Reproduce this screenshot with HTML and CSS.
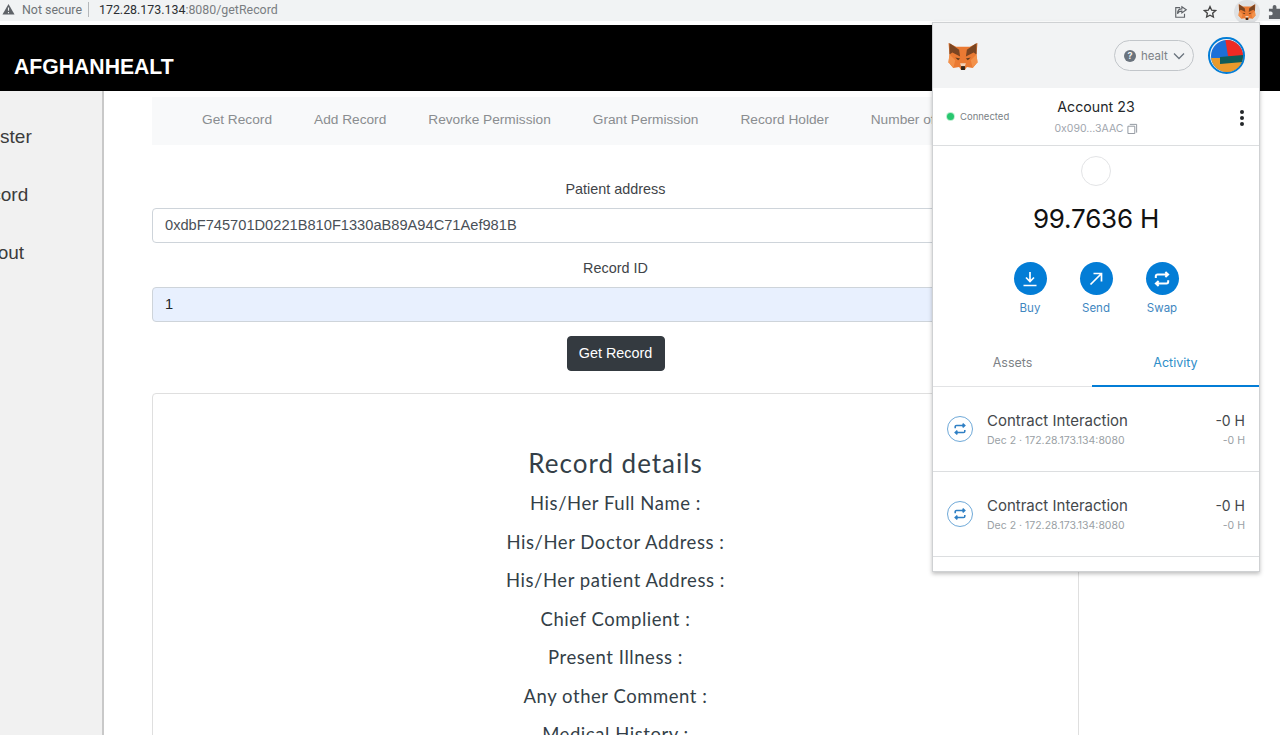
FILE: index.html
```html
<!DOCTYPE html>
<html lang="en">
<head>
<meta charset="utf-8">
<title>AfghanHealth</title>
<link rel="stylesheet" href="styles.css">
</head>
<body>
<svg class="defs" width="0" height="0" aria-hidden="true">
  <defs>
    <symbol id="fox" viewBox="0 0 32 30">
      <polygon points="1,2 9,6 23,6 31,2 30,14 31,22 26,28 20,27 18,30 14,30 12,27 6,28 1,22 2,14" fill="#ea7a33"/>
      <polygon points="2,2 12,9 13,16 5,12 2,14" fill="#7a4522"/>
      <polygon points="30,2 20,9 19,16 27,12 30,14" fill="#7a4522"/>
      <polygon points="1,22 2,14 8,20 6,28" fill="#f3914a"/>
      <polygon points="31,22 30,14 24,20 26,28" fill="#f3914a"/>
      <polygon points="13,23 19,23 18,26 14,26" fill="#f3d2b8"/>
      <polygon points="14,26 18,26 18,30 14,30" fill="#33261a"/>
      <polygon points="8,17 13,18 11,20" fill="#5c3a1e"/>
      <polygon points="24,17 19,18 21,20" fill="#5c3a1e"/>
    </symbol>
    <symbol id="swap" viewBox="0 0 16 16">
      <path d="M2.500 7V5.500A1.500 1.500 0 0 1 4 4h9M11 1.800 13.400 4 11 6.200M13.500 9v1.500A1.500 1.500 0 0 1 12 12H3M5 9.800 2.600 12 5 14.200" fill="none" stroke="currentColor" stroke-width="1.800"/>
    </symbol>
  </defs>
</svg>

<header class="chrome">
  <svg class="warn" viewBox="0 0 14 12" width="13" height="12"><path d="M7 0.500 13.500 12H.5Z" fill="#5f6368"/><path d="M7 4.500V8M7 9.200v1.300" stroke="#f1f3f4" stroke-width="1.200"/></svg>
  <span class="not-secure">Not secure</span>
  <span class="url"><b>172.28.173.134</b>:8080/getRecord</span>
  <span class="chrome-tools">
    <svg viewBox="0 0 16 16" width="14" height="14"><path d="M9 2l5 3.500L9 9V7C6 7 4.800 8 4 10c0-3.500 2-5.500 5-5.500zM7 3H2v11h10v-4" fill="none" stroke="#5f6368" stroke-width="1.300"/></svg>
    <svg class="star" viewBox="0 0 16 16" width="14" height="14"><path d="M8 1.800l1.900 4.100 4.400.500-3.300 3 .900 4.400L8 11.600 4.100 13.800l.900-4.400-3.300-3 4.400-.500z" fill="none" stroke="#444" stroke-width="1.500"/></svg>
    <span class="ext-btn"><svg width="18" height="17"><use href="#fox"/></svg></span>
    <svg class="puzzle" viewBox="0 0 16 16" width="15" height="15"><path d="M1 5h4V3a2 2 0 0 1 4 0v2h4v4h2a2 2 0 0 1 0 4h-2v3H1v-4h2a2 2 0 0 0 0-4H1z" fill="#5f6368"/></svg>
  </span>
</header>

<div class="topbar"><span class="brand">AFGHANHEALT</span></div>

<div class="page">
  <aside class="sidebar">
    <a class="side-register">Register</a>
    <a class="side-record">Record</a>
    <a class="side-logout">Logout</a>
  </aside>
  <main class="main">
    <nav class="tabs">
      <a>Get Record</a>
      <a>Add Record</a>
      <a>Revorke Permission</a>
      <a>Grant Permission</a>
      <a>Record Holder</a>
      <a>Number of Records</a>
    </nav>
    <form class="form">
      <label class="label">Patient address</label>
      <div class="input">0xdbF745701D0221B810F1330aB89A94C71Aef981B</div>
      <label class="label second">Record ID</label>
      <div class="input filled">1</div>
      <button class="btn" type="button">Get Record</button>
    </form>
    <section class="card">
      <h2>Record details</h2>
      <p>His/Her Full Name :</p>
      <p>His/Her Doctor Address :</p>
      <p>His/Her patient Address :</p>
      <p>Chief Complient :</p>
      <p>Present Illness :</p>
      <p>Any other Comment :</p>
      <p>Medical History :</p>
    </section>
  </main>
</div>

<aside class="mm">
  <div class="mm-head">
    <svg width="32" height="29"><use href="#fox"/></svg>
    <div class="network">
      <span class="q">?</span>
      <span class="net-name">healt</span>
      <svg viewBox="0 0 12 8" width="12" height="8"><path d="M1 1.500 6 6.500 11 1.500" fill="none" stroke="#6a737d" stroke-width="1.300"/></svg>
    </div>
    <span class="avatar">
      <svg viewBox="0 0 32 32" width="32" height="32">
        <defs><clipPath id="round"><circle cx="16" cy="16" r="16"/></clipPath></defs>
        <g clip-path="url(#round)">
          <rect width="32" height="32" fill="#1c6fd8"/>
          <polygon points="14,-2 34,-2 34,20 17,16" fill="#ee2a24"/>
          <rect x="0" y="18" width="32" height="16" fill="#e99a2c"/>
          <polygon points="9,17 32,15 32,22 9,24" fill="#0e5c58"/>
        </g>
      </svg>
    </span>
  </div>
  <div class="mm-account">
    <span class="conn"><i></i>Connected</span>
    <div class="acct">
      <div class="acct-name">Account 23</div>
      <div class="acct-addr">0x090...3AAC
        <svg viewBox="0 0 12 12" width="11" height="11"><path d="M3 1.500h7.500V10.500M1 3.500h7.500v8H1z" fill="none" stroke="#8a9099"/></svg>
      </div>
    </div>
    <span class="kebab"><i></i><i></i><i></i></span>
  </div>
  <div class="mm-balance">
    <span class="token"></span>
    <div class="amount">99.7636 H</div>
    <div class="actions">
      <div class="action">
        <span class="round">
          <svg viewBox="0 0 20 20" width="20" height="20"><path d="M10 3v9M6 8.500l4 4 4-4M3.500 16.500h13" fill="none" stroke="#fff" stroke-width="1.700"/></svg>
        </span>Buy
      </div>
      <div class="action">
        <span class="round">
          <svg viewBox="0 0 20 20" width="20" height="20"><path d="M4.500 15.500 15 5M7.500 4.500h8v8" fill="none" stroke="#fff" stroke-width="1.700"/></svg>
        </span>Send
      </div>
      <div class="action">
        <span class="round">
          <svg width="18" height="18"><use href="#swap"/></svg>
        </span>Swap
      </div>
    </div>
  </div>
  <div class="mm-tabs">
    <span class="assets">Assets</span>
    <span class="active">Activity</span>
  </div>
  <div class="tx">
    <span class="tx-icon"><svg width="14" height="14"><use href="#swap"/></svg></span>
    <div class="tx-text">
      <div class="tx-title">Contract Interaction</div>
      <div class="tx-sub">Dec 2 · 172.28.173.134:8080</div>
    </div>
    <div class="tx-val">
      <div class="tx-amt">-0 H</div>
      <div class="tx-sub">-0 H</div>
    </div>
  </div>
  <div class="tx">
    <span class="tx-icon"><svg width="14" height="14"><use href="#swap"/></svg></span>
    <div class="tx-text">
      <div class="tx-title">Contract Interaction</div>
      <div class="tx-sub">Dec 2 · 172.28.173.134:8080</div>
    </div>
    <div class="tx-val">
      <div class="tx-amt">-0 H</div>
      <div class="tx-sub">-0 H</div>
    </div>
  </div>
</aside>
</body>
</html>
```
FILE: styles.css
```css
* { box-sizing: border-box; }
html, body { margin: 0; height: 735px; overflow: hidden; }
body { position: relative; background: #fff; font-family: "Liberation Sans", Arial, sans-serif; color: #212529; }
.defs { display: block; }

.chrome { height: 25px; padding: 0 0 2px 2px; display: flex; align-items: center; background: #f1f3f4; border-bottom: 4px solid #fff; font-family: Roboto, sans-serif; font-size: 12.400px; color: #5f6368; }
.warn { flex: none; margin-top: -2px; }
.not-secure { margin-left: 7px; padding-right: 6px; border-right: 1px solid #b5b8bb; color: #6f7377; }
.url { margin-left: 10px; color: #7a7e82; }
.url b { font-weight: 400; color: #2b2e31; }
.chrome-tools { margin-left: auto; margin-top: 4px; display: flex; align-items: center; }
.chrome-tools svg { flex: none; }
.star { margin-left: 15px; }
.ext-btn { margin-left: 17px; width: 26px; height: 24px; display: flex; align-items: center; justify-content: center; background: #dfe1e3; border-radius: 12px; }
.puzzle { margin: 0 -3px 0 8px; }

.topbar { height: 66px; background: #000; display: flex; align-items: center; padding: 17px 0 0 14px; }
.brand { color: #fff; font-size: 21.200px; font-weight: 700; }

.page { display: flex; height: 644px; overflow: hidden; }
.sidebar { flex: none; width: 104px; background: #f1f1f1; border-right: 2px solid #c9c9c9; padding-top: 35px; overflow: hidden; display: flex; flex-direction: column; gap: 36px; }
.sidebar a { font-size: 19px; line-height: 22px; color: #3c3c3c; white-space: nowrap; }
.side-register { margin-left: -39px; }
.side-record { margin-left: -33px; }
.side-logout { margin-left: -34px; }

.main { flex: none; width: 927px; margin-left: 48px; padding-top: 6px; text-align: center; }
.tabs { height: 48px; padding: 0 0 4px 50px; display: flex; align-items: center; gap: 42px; background: #f8f9fa; font-size: 13.700px; color: #8a8d90; white-space: nowrap; overflow: hidden; }
.form { display: flex; flex-direction: column; align-items: center; padding-top: 36px; }
.label { font-size: 14.400px; line-height: 17px; color: #3f4448; margin-bottom: 10px; }
.label.second { margin-top: 17px; margin-bottom: 10px; }
.input { width: 100%; height: 35px; padding: 0 12px 2px; display: flex; align-items: center; border: 1px solid #ced4da; border-radius: 4px; font-size: 14.650px; color: #495057; background: #fff; }
.input.filled { background: #e8f0fe; color: #212529; }
.btn { margin-top: 14px; width: 98px; height: 35px; padding-bottom: 3px; border: 1px solid #343a40; border-radius: 4px; background: #343a40; color: #fff; font: 14.400px "Liberation Sans", Arial, sans-serif; }
.card { margin-top: 22px; height: 400px; padding-top: 53px; border: 1px solid #dfdfdf; border-radius: 4px; font-family: "Lato", sans-serif; color: #343f48; }
.card h2 { margin: 0; font-size: 26px; line-height: 33px; font-weight: 400; letter-spacing: 1px; }
.card p { margin: 0 0 14.500px; font-size: 18.500px; line-height: 24px; letter-spacing: .55px; }
.card h2 + p { margin-top: 11px; }

.mm { position: absolute; left: 932px; top: 22px; width: 328px; height: 550px; background: #fff; border: 1px solid #cfd1d3; box-shadow: 0 2px 4px rgba(0,0,0,.25); font-family: Inter, sans-serif; }
.mm-head { height: 65px; padding: 0 14px; display: flex; align-items: center; background: #f2f3f4; }
.network { margin-left: auto; width: 80px; height: 31px; padding: 0 8px 0 9px; display: flex; align-items: center; border: 1px solid #c2c6ca; border-radius: 16px; font-size: 11.500px; color: #7d8287; }
.q { width: 12px; height: 12px; border-radius: 50%; background: #6a737d; color: #f2f3f4; font-size: 9px; line-height: 12px; font-weight: 700; text-align: center; }
.net-name { margin-left: 5px; margin-right: auto; }
.avatar { margin-left: 14px; width: 37px; height: 37px; display: flex; align-items: center; justify-content: center; border: 2px solid #037dd6; border-radius: 50%; }
.avatar svg { display: block; }
.mm-account { position: relative; height: 58px; display: flex; align-items: center; justify-content: center; border-bottom: 1px solid #dcdee0; }
.conn { position: absolute; left: 14px; top: 23px; display: flex; align-items: center; gap: 6px; font-size: 9.500px; color: #7a7f85; }
.conn i { width: 7px; height: 7px; border-radius: 50%; background: #28c76f; box-shadow: 0 0 0 1px #bdeed1; }
.acct { text-align: center; margin-top: 1px; }
.acct-name { font-size: 14.200px; color: #24272a; line-height: 20px; }
.acct-addr { margin-top: 3px; display: flex; align-items: center; justify-content: center; gap: 3px; font-size: 10.500px; line-height: 18px; color: #9fa6ae; }
.kebab { position: absolute; right: 15px; top: 22px; display: flex; flex-direction: column; gap: 2px; }
.kebab i { width: 4px; height: 4px; border-radius: 50%; background: #24272a; }
.mm-balance { height: 199px; padding-top: 10px; display: flex; flex-direction: column; align-items: center; }
.token { width: 30px; height: 30px; border: 1px solid #e3e4e6; border-radius: 50%; }
.amount { margin-top: 15px; font-size: 26px; line-height: 36px; color: #111; letter-spacing: -.2px; }
.actions { margin-top: 25px; display: flex; gap: 33px; }
.action { width: 33px; display: flex; flex-direction: column; align-items: center; gap: 5px; font-size: 11.500px; line-height: 16px; color: #3f87bf; }
.round { width: 33px; height: 33px; border-radius: 50%; background: #037dd6; color: #fff; display: flex; align-items: center; justify-content: center; }
.mm-tabs { height: 42px; display: flex; font-size: 12.500px; color: #7d8287; border-bottom: 1px solid #e2e3e5; }
.mm-tabs span { display: flex; align-items: center; justify-content: center; padding-bottom: 6px; }
.mm-tabs .assets { flex: 0 0 159px; }
.mm-tabs .active { flex: 1; color: #2f8ec9; border-bottom: 2px solid #037dd6; margin-bottom: -1px; }
.tx { height: 85px; padding: 0 14px; display: flex; align-items: center; border-bottom: 1px solid #dcdee0; }
.tx-icon { flex: none; width: 26px; height: 26px; border: 1px solid #6fa9d8; border-radius: 50%; color: #2e7fc4; display: flex; align-items: center; justify-content: center; }
.tx-text { margin-left: 14px; flex: 1; padding-top: 2px; }
.tx-title { font-size: 15px; line-height: 20px; color: #44484c; margin-bottom: 1px; }
.tx-sub { font-size: 10.500px; line-height: 18px; color: #9a9fa5; }
.tx-val { text-align: right; padding-top: 2px; }
.tx-amt { font-size: 14px; line-height: 20px; color: #44484c; margin-bottom: 1px; }
```
